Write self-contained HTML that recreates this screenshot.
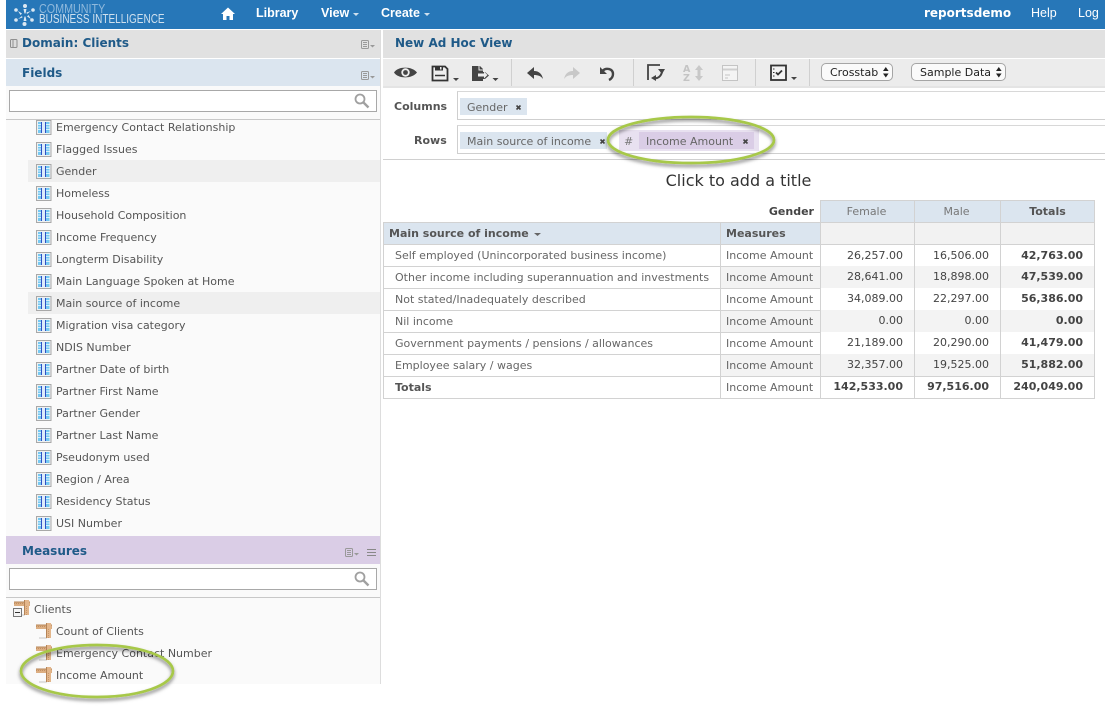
<!DOCTYPE html>
<html><head><meta charset="utf-8"><style>
html,body{margin:0;padding:0;background:#fff}
#p{position:relative;width:1105px;height:707px;overflow:hidden;background:#fff;font:11px "DejaVu Sans",sans-serif;color:#555}
#p div{position:absolute;box-sizing:border-box;white-space:nowrap}
.b{font-weight:bold}
.nav{color:#fff;font:bold 12.5px/14px "Liberation Sans",sans-serif;top:6px}
.h{font-weight:bold;font-size:12px;color:#1f5a88;line-height:14px}
.f{left:56px;line-height:14px;color:#555;margin-top:1px}
.s{background:#fff;border:1px solid #a8a8a8;height:22px}
.pill{height:17px;line-height:19px;background:#dbe5ef;color:#666}
.r{text-align:right;line-height:14px;color:#444;margin-top:1px}
.l{line-height:14px;color:#666;margin-top:1px}
.c{text-align:center;line-height:14px;margin-top:1px}
</style></head><body><div id="p">

<div style="left:6px;top:0;width:1099px;height:29px;background:#2777b8"></div>
<div style="left:39px;top:3px;font:12.5px/12px 'Liberation Sans',sans-serif;color:#8fb9dc;transform:scaleX(.86);transform-origin:0 0">COMMUNITY</div>
<div style="left:39px;top:13px;font:12.5px/12px 'Liberation Sans',sans-serif;color:#cfe0ee;transform:scaleX(.8);transform-origin:0 0">BUSINESS INTELLIGENCE</div>
<div class="nav" style="left:256px">Library</div>
<div class="nav" style="left:321px">View</div>
<div class="nav" style="left:381px">Create</div>
<div class="nav" style="left:924px;font:bold 12px/14px 'DejaVu Sans',sans-serif">reportsdemo</div>
<div class="nav" style="left:1031px;font-weight:normal">Help</div>
<div class="nav" style="left:1078px;font-weight:normal">Log</div>

<div style="left:6px;top:30px;width:374px;height:28px;background:#e1e1e1"></div>
<div style="left:6px;top:59px;width:374px;height:27px;background:#dbe5ef"></div>
<div style="left:6px;top:86px;width:374px;height:451px;background:#fafafa"></div>
<div style="left:380px;top:30px;width:1px;height:654px;background:#ddd"></div>
<div style="left:6px;top:119px;width:374px;height:1px;background:#c8c8c8"></div>
<div style="left:28px;top:160px;width:352px;height:22px;background:#efefef"></div>
<div style="left:28px;top:292px;width:352px;height:22px;background:#efefef"></div>
<div class="h" style="left:22px;top:36px">Domain: Clients</div>
<div class="h" style="left:22px;top:66px">Fields</div>
<div class="s" style="left:9px;top:90px;width:368px"></div>

<div class="f" style="top:120px">Emergency Contact Relationship</div>
<div class="f" style="top:142px">Flagged Issues</div>
<div class="f" style="top:164px">Gender</div>
<div class="f" style="top:186px">Homeless</div>
<div class="f" style="top:208px">Household Composition</div>
<div class="f" style="top:230px">Income Frequency</div>
<div class="f" style="top:252px">Longterm Disability</div>
<div class="f" style="top:274px">Main Language Spoken at Home</div>
<div class="f" style="top:296px">Main source of income</div>
<div class="f" style="top:318px">Migration visa category</div>
<div class="f" style="top:340px">NDIS Number</div>
<div class="f" style="top:362px">Partner Date of birth</div>
<div class="f" style="top:384px">Partner First Name</div>
<div class="f" style="top:406px">Partner Gender</div>
<div class="f" style="top:428px">Partner Last Name</div>
<div class="f" style="top:450px">Pseudonym used</div>
<div class="f" style="top:472px">Region / Area</div>
<div class="f" style="top:494px">Residency Status</div>
<div class="f" style="top:516px">USI Number</div>

<div style="left:6px;top:536px;width:374px;height:28px;background:#dacde6"></div>
<div style="left:6px;top:564px;width:374px;height:120px;background:#fafafa"></div>
<div style="left:6px;top:597px;width:374px;height:1px;background:#c8c8c8"></div>
<div class="h" style="left:22px;top:544px">Measures</div>
<div class="s" style="left:9px;top:568px;width:368px"></div>
<div class="f" style="left:34px;top:602px">Clients</div>
<div class="f" style="top:624px">Count of Clients</div>
<div class="f" style="top:646px">Emergency Contact Number</div>
<div class="f" style="top:668px">Income Amount</div>

<div style="left:383px;top:30px;width:722px;height:28px;background:#e1e1e1"></div>
<div style="left:383px;top:59px;width:722px;height:27px;background:#ececec"></div>
<div style="left:383px;top:86px;width:722px;height:2px;background:#e4e4e4"></div>
<div class="h" style="left:395px;top:36px">New Ad Hoc View</div>
<div style="left:511px;top:59px;width:1px;height:27px;background:#d0d0d0"></div>
<div style="left:633px;top:59px;width:1px;height:27px;background:#d0d0d0"></div>
<div style="left:755px;top:59px;width:1px;height:27px;background:#d0d0d0"></div>
<div style="left:809px;top:59px;width:1px;height:27px;background:#d0d0d0"></div>
<div style="left:821px;top:63px;width:72px;height:18px;background:#fafafa;border:1px solid #a5a5a5;border-radius:5px;color:#222;line-height:18px;padding-left:8px">Crosstab</div>
<div style="left:911px;top:63px;width:95px;height:18px;background:#fafafa;border:1px solid #a5a5a5;border-radius:5px;color:#222;line-height:18px;padding-left:8px">Sample Data</div>

<div style="left:457px;top:91px;width:648px;height:29px;border:1px solid #cfcfcf;border-right:0;border-top-color:#d8d8d8"></div>
<div style="left:457px;top:125px;width:648px;height:29px;border:1px solid #cfcfcf;border-right:0;border-top-color:#d8d8d8"></div>
<div style="left:383px;top:159px;width:722px;height:1px;background:#d0d0d0"></div>
<div class="b" style="left:394px;top:100px;line-height:14px">Columns</div>
<div class="b" style="left:414px;top:134px;line-height:14px">Rows</div>
<div class="pill" style="left:460px;top:98px;width:67px;padding-left:7px">Gender</div>
<div class="pill" style="left:460px;top:132px;width:147px;padding-left:7px">Main source of income</div>
<div style="left:619px;top:130px;width:140px;height:21px;background:#e8e1f0"></div>
<div style="left:639px;top:132px;width:115px;height:17px;background:#dacde6;line-height:19px;padding-left:7px;color:#666">Income Amount</div>
<div style="left:624px;top:135px;line-height:14px;color:#777;font-style:italic">#</div>

<div style="left:383px;top:171px;width:711px;text-align:center;font-size:16px;line-height:20px;color:#333">Click to add a title</div>

<div style="left:820px;top:200px;width:274px;height:22px;background:#dbe5ef"></div>
<div style="left:383px;top:222px;width:437px;height:23px;background:#dbe5ef"></div>
<div style="left:820px;top:222px;width:274px;height:23px;background:#f2f2f2"></div>
<div style="left:720px;top:266px;width:374px;height:22px;background:#f3f3f3"></div>
<div style="left:720px;top:310px;width:374px;height:22px;background:#f3f3f3"></div>
<div style="left:720px;top:354px;width:374px;height:22px;background:#f3f3f3"></div>

<div style="left:383px;top:222px;width:711px;height:1px;background:#d2d2d2"></div>
<div style="left:383px;top:244px;width:711px;height:1px;background:#d2d2d2"></div>
<div style="left:383px;top:266px;width:438px;height:1px;background:#d2d2d2"></div>
<div style="left:383px;top:288px;width:438px;height:1px;background:#d2d2d2"></div>
<div style="left:383px;top:310px;width:438px;height:1px;background:#d2d2d2"></div>
<div style="left:383px;top:332px;width:438px;height:1px;background:#d2d2d2"></div>
<div style="left:383px;top:354px;width:438px;height:1px;background:#d2d2d2"></div>
<div style="left:383px;top:376px;width:711px;height:1px;background:#d2d2d2"></div>
<div style="left:383px;top:398px;width:711px;height:1px;background:#d2d2d2"></div>
<div style="left:820px;top:200px;width:274px;height:1px;background:#d2d2d2"></div>
<div style="left:383px;top:222px;width:1px;height:177px;background:#d2d2d2"></div>
<div style="left:720px;top:222px;width:1px;height:177px;background:#d2d2d2"></div>
<div style="left:820px;top:200px;width:1px;height:199px;background:#d2d2d2"></div>
<div style="left:914px;top:200px;width:1px;height:199px;background:#d2d2d2"></div>
<div style="left:1000px;top:200px;width:1px;height:199px;background:#d2d2d2"></div>
<div style="left:1094px;top:200px;width:1px;height:199px;background:#d2d2d2"></div>

<div class="b r" style="left:700px;top:204px;width:114px">Gender</div>
<div class="c" style="left:821px;top:204px;width:91px;color:#777">Female</div>
<div class="c" style="left:915px;top:204px;width:83px;color:#777">Male</div>
<div class="c b" style="left:1001px;top:204px;width:93px">Totals</div>
<div class="b" style="left:389px;top:227px;line-height:14px">Main source of income</div>
<div class="b" style="left:726px;top:227px;line-height:14px">Measures</div>

<div class="l" style="left:395px;top:248px">Self employed (Unincorporated business income)</div>
<div class="l" style="left:395px;top:270px">Other income including superannuation and investments</div>
<div class="l" style="left:395px;top:292px">Not stated/Inadequately described</div>
<div class="l" style="left:395px;top:314px">Nil income</div>
<div class="l" style="left:395px;top:336px">Government payments / pensions / allowances</div>
<div class="l" style="left:395px;top:358px">Employee salary / wages</div>
<div class="l b" style="left:395px;top:380px;color:#555">Totals</div>

<div class="l" style="left:726px;top:248px">Income Amount</div>
<div class="l" style="left:726px;top:270px">Income Amount</div>
<div class="l" style="left:726px;top:292px">Income Amount</div>
<div class="l" style="left:726px;top:314px">Income Amount</div>
<div class="l" style="left:726px;top:336px">Income Amount</div>
<div class="l" style="left:726px;top:358px">Income Amount</div>
<div class="l" style="left:726px;top:380px">Income Amount</div>

<div class="r" style="left:820px;top:248px;width:83px">26,257.00</div><div class="r" style="left:910px;top:248px;width:79px">16,506.00</div><div class="r b" style="left:1000px;top:248px;width:83px">42,763.00</div>
<div class="r" style="left:820px;top:269px;width:83px">28,641.00</div><div class="r" style="left:910px;top:269px;width:79px">18,898.00</div><div class="r b" style="left:1000px;top:269px;width:83px">47,539.00</div>
<div class="r" style="left:820px;top:291px;width:83px">34,089.00</div><div class="r" style="left:910px;top:291px;width:79px">22,297.00</div><div class="r b" style="left:1000px;top:291px;width:83px">56,386.00</div>
<div class="r" style="left:820px;top:313px;width:83px">0.00</div><div class="r" style="left:910px;top:313px;width:79px">0.00</div><div class="r b" style="left:1000px;top:313px;width:83px">0.00</div>
<div class="r" style="left:820px;top:335px;width:83px">21,189.00</div><div class="r" style="left:910px;top:335px;width:79px">20,290.00</div><div class="r b" style="left:1000px;top:335px;width:83px">41,479.00</div>
<div class="r" style="left:820px;top:357px;width:83px">32,357.00</div><div class="r" style="left:910px;top:357px;width:79px">19,525.00</div><div class="r b" style="left:1000px;top:357px;width:83px">51,882.00</div>
<div class="r b" style="left:820px;top:379px;width:83px">142,533.00</div><div class="r b" style="left:910px;top:379px;width:79px">97,516.00</div><div class="r b" style="left:1000px;top:379px;width:83px">240,049.00</div>

<svg width="1105" height="707" style="position:absolute;left:0;top:0">
<defs>
<symbol id="fi" viewBox="0 0 16 16" overflow="visible"><rect x=".5" y=".5" width="14.500" height="14" fill="#eef1f3" stroke="#a8a8a8"/><rect x="2" y="2" width="11.500" height="11" fill="#74c8f2"/><path d="M2 4.500h11.500M2 7h11.500M2 9.500h11.500" stroke="#d8f1fc" stroke-width="1"/><rect x="6" y="2" width="3.500" height="11" fill="#dcebfa"/><path d="M5.500 2v11M9.500 2v11" stroke="#2f50c4" stroke-width="1"/></symbol>
<symbol id="ru" viewBox="0 0 16 16" overflow="visible"><path d="M3 15h8" stroke="#d8d8d8" stroke-width="1.500" fill="none"/><path d="M0 2h16v4H0z" fill="#dcae82"/><path d="M0 2h16" stroke="#b58457"/><path d="M0 3.500h10" stroke="#c18f61" stroke-dasharray="1 1"/><path d="M10 0h5v15h-5z" fill="#e3b68b"/><path d="M10.500 0v15" stroke="#b58457"/><path d="M12.500 6v9" stroke="#c8976a" stroke-dasharray="1 1"/></symbol>
<symbol id="mn" viewBox="0 0 14 9" overflow="visible"><rect x=".5" y=".5" width="7" height="8" rx="1" fill="none" stroke="#999"/><path d="M2 2.500h4M2 4.500h4M2 6.500h4" stroke="#999"/><path d="M9 5h5l-2.500 2.500z" fill="#999"/></symbol>
<symbol id="mg" viewBox="0 0 16 16" overflow="visible"><circle cx="6" cy="6" r="4.500" fill="none" stroke="#a0a0a0" stroke-width="1.800"/><path d="M9.500 9.500l5 5" stroke="#a0a0a0" stroke-width="2.400"/></symbol>
<filter id="sh" x="-10%" y="-30%" width="120%" height="170%"><feDropShadow dx="0" dy="2.500" stdDeviation="1.800" flood-color="#000" flood-opacity=".5"/></filter>
</defs>

<!-- logo -->
<g fill="#dbe8f2"><circle cx="25" cy="6" r="2"/><circle cx="24.500" cy="24" r="2"/><circle cx="16" cy="10" r="1.800"/><circle cx="32" cy="20" r="1.800"/><circle cx="16" cy="20" r="1.800"/><circle cx="33" cy="10" r="1.800"/><path d="M23.500 9h3l-1 4.500h-1zM23.500 21h3l-1-4.500h-1zM18 11l4 2.500-1.500 1.500zM31 19l-4-2.500 1.500-1.500zM18 19l4-3 .5 1.500zM31 11l-4 3-.5-1.500z"/></g>
<!-- nav icons -->
<path d="M228 7.500l7 6.500h-2v6h-3.500v-4h-3v4H223v-6h-2z" fill="#fff"/>
<path d="M353 13h6l-3 3zM424 13h6l-3 3z" fill="#cfe0ee"/>

<!-- panel icons -->
<rect x="10.500" y="39.500" width="6.500" height="8" rx="1" fill="#ddd" stroke="#8f8f8f"/><path d="M13 40v7" stroke="#8f8f8f"/>
<use href="#mn" x="361" y="40" width="14" height="9"/>
<use href="#mn" x="361" y="71" width="14" height="9"/>
<use href="#mn" x="345" y="548" width="14" height="9"/>
<path d="M367 549.500h9M367 552.500h9M367 555.500h9" stroke="#888"/>
<use href="#mg" x="354" y="93" width="16" height="16"/>
<use href="#mg" x="354" y="571" width="16" height="16"/>

<!-- field icons -->
<use href="#fi" x="36" y="120" width="16" height="16"/><use href="#fi" x="36" y="142" width="16" height="16"/><use href="#fi" x="36" y="164" width="16" height="16"/><use href="#fi" x="36" y="186" width="16" height="16"/><use href="#fi" x="36" y="208" width="16" height="16"/><use href="#fi" x="36" y="230" width="16" height="16"/><use href="#fi" x="36" y="252" width="16" height="16"/><use href="#fi" x="36" y="274" width="16" height="16"/><use href="#fi" x="36" y="296" width="16" height="16"/><use href="#fi" x="36" y="318" width="16" height="16"/><use href="#fi" x="36" y="340" width="16" height="16"/><use href="#fi" x="36" y="362" width="16" height="16"/><use href="#fi" x="36" y="384" width="16" height="16"/><use href="#fi" x="36" y="406" width="16" height="16"/><use href="#fi" x="36" y="428" width="16" height="16"/><use href="#fi" x="36" y="450" width="16" height="16"/><use href="#fi" x="36" y="472" width="16" height="16"/><use href="#fi" x="36" y="494" width="16" height="16"/><use href="#fi" x="36" y="516" width="16" height="16"/>

<!-- measure icons -->
<use href="#ru" x="14" y="600" width="16" height="16"/>
<rect x="13.500" y="608.500" width="8" height="8" fill="#f4f4f4" stroke="#777"/><path d="M15 612.500h5" stroke="#333"/>
<use href="#ru" x="36" y="623" width="16" height="16"/><use href="#ru" x="36" y="645" width="16" height="16"/><use href="#ru" x="36" y="667" width="16" height="16"/>

<!-- toolbar: eye -->
<path d="M394 72.500c4-6.500 18-6.500 23 0c-5 6.500-19 6.500-23 0z" fill="#444"/><circle cx="405.500" cy="72.500" r="4.200" fill="#eee"/><circle cx="405.500" cy="72.500" r="2.400" fill="#444"/>
<!-- save -->
<path d="M432.500 66.500h12.500l2.500 2.500v11.500h-15z" fill="#eee" stroke="#333" stroke-width="1.800"/><path d="M435 66h8v4.500h-8z" fill="#333"/><path d="M440 67h1.500v2.500H440z" fill="#eee"/><path d="M435 75.500h10" stroke="#333" stroke-width="1.500"/>
<path d="M453 78h6l-3 3z" fill="#444"/>
<!-- save as -->
<path d="M472 66h8l3 3v3h2l4 3.500l-4 3.500h-2v2h-11z" fill="#444"/><path d="M479 66v4h4" stroke="#eee" fill="none"/><path d="M478 73.500h6v-2l3.500 3.500l-3.500 3.500v-2h-6z" fill="#eee"/>
<path d="M492.500 78h6l-3 3z" fill="#444"/>
<!-- undo/redo -->
<path d="M527 73l7-6v4c5 0 8 3 9 8c-2-3-5-4-9-4v4z" fill="#444"/>
<path d="M580 73l-7-6v4c-5 0-8 3-9 8c2-3 5-4 9-4v4z" fill="#c8c8c8"/>
<path d="M603 70.500c3-3 10-2 10 3.500c0 3-2 5-4 6" fill="none" stroke="#444" stroke-width="2.400"/><path d="M600 67v7h7z" fill="#444"/>
<!-- switch -->
<path d="M648 80v-15h12" fill="none" stroke="#444" stroke-width="1.800"/><path d="M654 78c4 1 7-2 8-6" fill="none" stroke="#444" stroke-width="2"/><path d="M658 69l7 0-3 5zM651 78l5-3v6z" fill="#444"/>
<!-- sort -->
<text x="683" y="72" font-family="DejaVu Sans,sans-serif" font-size="9.500" font-weight="bold" fill="#c4c4c4">A</text><text x="683" y="81" font-family="DejaVu Sans,sans-serif" font-size="9.500" font-weight="bold" fill="#c4c4c4">Z</text>
<path d="M699 65l4 5h-2.500v6h2.500l-4 5l-4-5h2.500v-6H695z" fill="#c8c8c8"/>
<!-- filter -->
<rect x="722.500" y="65.500" width="15" height="15" fill="#f4f4f4" stroke="#c4c4c4"/><path d="M723 68.500h14v2h-14z" fill="#cfcfcf"/><path d="M725 75h5M725 78h3" stroke="#c4c4c4"/>
<!-- checklist -->
<rect x="771" y="65.500" width="15" height="14.500" fill="#f2f2f2" stroke="#333" stroke-width="1.800"/><path d="M773 69h1.500M773 72.500h1.500M773 76h1.500" stroke="#333"/><path d="M776 72.500l2 2 4-4" fill="none" stroke="#333" stroke-width="1.800"/>
<path d="M791 77h6l-3 3z" fill="#444"/>
<!-- select arrows -->
<path d="M883 71l2.800-4 2.800 4zM883 73.500l2.800 4 2.800-4zM996 71l2.800-4 2.800 4zM996 73.500l2.800 4 2.800-4z" fill="#222"/>
<!-- chip remove marks -->
<path d="M516.500 105.500l4 4M520.500 105.500l-4 4M600.500 139.500l4 4M604.500 139.500l-4 4M743.500 139.500l4 4M747.500 139.500l-4 4" stroke="#444" stroke-width="1.600" fill="none"/>
<!-- sort arrow -->
<path d="M534 233h7l-3.500 3z" fill="#666"/>
<!-- ellipses -->
<ellipse cx="691" cy="140" rx="83" ry="23" fill="none" stroke="#a7c84a" stroke-width="2.700" filter="url(#sh)"/>
<ellipse cx="97" cy="671" rx="76" ry="26" fill="none" stroke="#a7c84a" stroke-width="2.700" filter="url(#sh)"/>
</svg>
</div></body></html>
